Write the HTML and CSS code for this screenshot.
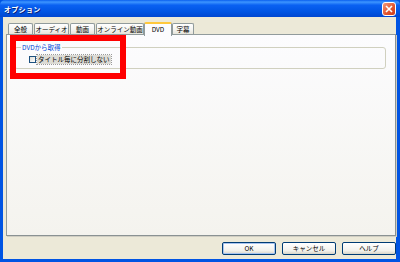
FILE: index.html
```html
<!DOCTYPE html>
<html lang="ja">
  <head>
    <meta charset="UTF-8" />
    <title>オプション</title>
    <link rel="stylesheet" href="styles.css">
  </head>
  <body>
    <div class="window">
      <div class="titlebar">
        <span class="title">オプション</span>
        <span class="close">
          <svg width="8" height="8" viewBox="0 0 8 8">
            <path d="M1 1 L7 7 M7 1 L1 7" stroke="#fff" stroke-width="1.6" />
          </svg>
        </span>
      </div>

      <div class="client">
        <div class="tabs">
          <div class="tab t1">全般</div>
          <div class="tab t2">オーディオ</div>
          <div class="tab t3">動画</div>
          <div class="tab t4">オンライン動画</div>
          <div class="tab active">DVD</div>
          <div class="tab t6">字幕</div>
        </div>

        <div class="panel">
          <fieldset class="group">
            <legend>DVDから取得</legend>
            <label class="check">
              <span class="box"></span>
              <span class="check-text">タイトル毎に分割しない</span>
            </label>
          </fieldset>
        </div>

        <div class="buttons">
          <button class="default">OK</button>
          <button>キャンセル</button>
          <button>ヘルプ</button>
        </div>
      </div>

      <div class="highlight"></div>
    </div>
  </body>
</html>
```

FILE: styles.css
```css
* {
  box-sizing: border-box;
  font-family: "Noto Sans CJK JP", "Liberation Sans", sans-serif;
}
body {
  margin: 0;
  width: 400px;
  height: 262px;
  overflow: hidden;
}
.window {
  position: relative;
  width: 400px;
  height: 262px;
  display: flex;
  flex-direction: column;
  background: #0054e3;
  padding: 0 4px 3px 3px;
}
.titlebar {
  height: 17px;
  margin: 0 -4px 0 -3px;
  padding: 0 4px;
  display: flex;
  align-items: center;
  justify-content: space-between;
  border-radius: 5px 5px 0 0;
  background: linear-gradient(#0a5fee 0%, #3d95ff 12%, #0a61f2 30%, #0054e3 70%, #0046d0 100%);
}
.title {
  color: white;
  font-size: 7px;
  font-weight: bold;
  letter-spacing: 0.3px;
  text-shadow: 1px 1px 0 #0a1f70;
}
.close {
  width: 14px;
  height: 14px;
  display: flex;
  align-items: center;
  justify-content: center;
  border: 1px solid white;
  border-radius: 3px;
  background: linear-gradient(135deg, #f09a7c, #e2522b 60%, #c83d1c);
}
.client {
  flex: 1;
  display: flex;
  flex-direction: column;
  background-color: #ece9d8;
  padding: 5px 0 4px 3px;
}
.tabs {
  display: flex;
  align-items: flex-end;
  height: 12px;
  padding-left: 2px;
  position: relative;
  z-index: 1;
}
.tab {
  height: 11px;
  margin-right: 1px;
  font-size: 6.5px;
  line-height: 11px;
  text-align: center;
  color: black;
  border: 1px solid #919b9c;
  border-bottom: none;
  border-radius: 2px 2px 0 0;
  background: linear-gradient(#ffffff, #f3f3ef 60%, #e6e4da);
}
.t1 { width: 25px; }
.t2 { width: 35px; }
.t3 { width: 25px; }
.t4 { width: 48px; }
.t6 { width: 22px; }
.tab.active {
  width: 28px;
  height: 14px;
  margin: 0 0 -2px -1px;
  line-height: 11px;
  border-top: 2px solid #ffc83c;
  background: #fcfcfe;
}
.panel {
  flex: 1;
  border: 1px solid #919b9c;
  border-right-color: #8a9293;
  border-bottom-color: #8a9293;
  box-shadow: 1px 1px 0 #d0cec3;
  background: linear-gradient(#fcfcfe, #f4f3ee);
  padding: 8px 9px 0 7px;
}
.group {
  margin: 0;
  padding: 0 0 4px 14px;
  border: 1px solid #d0d0bf;
  border-radius: 3px;
}
.group legend {
  margin-left: -8px;
  padding: 0 1px;
  font-size: 6.5px;
  line-height: 8px;
  color: #0046d5;
}
.check {
  display: flex;
  align-items: center;
  margin-top: 4px;
  gap: 1px;
}
.box {
  width: 7px;
  height: 7px;
  border: 1px solid #1c5180;
  background: linear-gradient(135deg, #dcdcd7, #ffffff);
}
.check-text {
  font-size: 6.5px;
  line-height: 9px;
  padding: 0 1px;
  background-color: #dddcd6;
  outline: 1px dotted #9a9a9a;
}
.buttons {
  display: flex;
  justify-content: flex-end;
  gap: 6px;
  margin-top: 6px;
}
.buttons button {
  width: 54px;
  height: 13px;
  padding: 0;
  font-size: 6.5px;
  line-height: 11px;
  color: black;
  border: 1px solid #003c74;
  border-radius: 2px;
  background: linear-gradient(#ffffff, #f2f1ec 70%, #d8d5c8);
}
.buttons button.default {
  box-shadow: inset 0 0 0 1px #a8c4f0;
}
.highlight {
  position: absolute;
  left: 10px;
  top: 35px;
  width: 116px;
  height: 44px;
  border: 6px solid #ff0000;
  z-index: 2;
}
```
